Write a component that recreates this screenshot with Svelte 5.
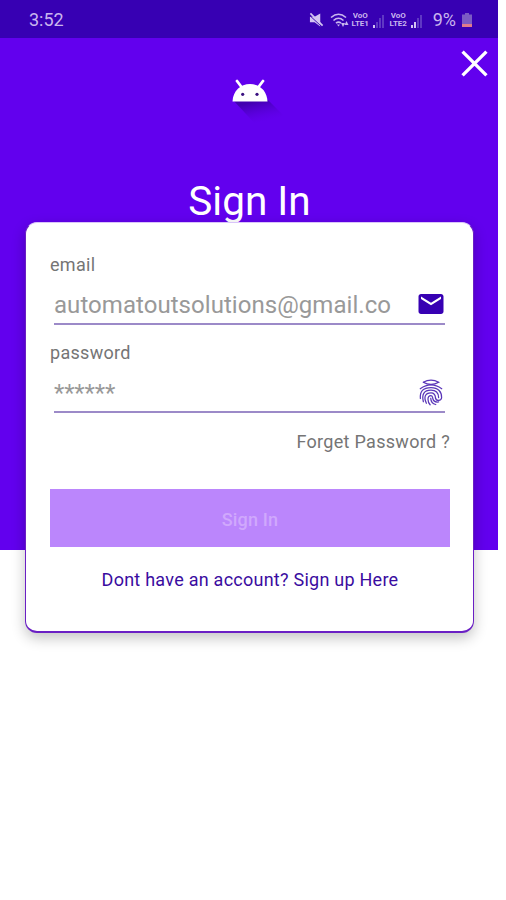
<script lang="ts">
	interface Sim {
		name: string;
		bars: number;
	}

	const sims: Sim[] = [
		{ name: 'LTE1', bars: 1 },
		{ name: 'LTE2', bars: 2 }
	];
	const barHeights = [3, 6, 10, 13];

	let email = 'automatoutsolutions@gmail.co';
	let password = '******';
</script>

<div class="screen">
	<header class="status-bar">
		<span class="clock">3:52</span>
		<div class="status-icons">
			<svg class="mute" viewBox="0 0 16 16">
				<path d="M1 4.500h5L12 1v14l-6-4.500H1z" />
				<path class="slash-gap" d="M0 2.500l14 13" />
				<path class="slash" d="M1.500 1l13 13" />
			</svg>
			<svg class="wifi" viewBox="0 0 19 16">
				<path d="M1 5.500Q8.500-1 16 5.500M3.500 8.500q5-4.500 10 0M6 11.200q2.500-2.200 5 0" />
				<path class="fill" d="M7 12.500h3l-1.500 2zM11 11h4l-2 4zM14.500 13l2-4 2 4z" />
			</svg>
			{#each sims as sim}
				<div class="sim">
					<div class="lte">
						<span>VoO</span>
						<span>{sim.name}</span>
					</div>
					<div class="signal">
						{#each barHeights as height, i}
							<i class:on={i < sim.bars} style="height: {height}px"></i>
						{/each}
					</div>
				</div>
			{/each}
			<span class="percent">9%</span>
			<svg class="battery" viewBox="0 0 10 14">
				<path class="shell" d="M3 0h4v1.500h3V14H0V1.500h3z" />
				<path class="level" d="M0 11h10v3H0z" />
			</svg>
		</div>
	</header>

	<section class="hero">
		<div class="toolbar">
			<svg class="close" viewBox="0 0 26 26">
				<path d="M1.500 1.500l23 23M24.500 1.500l-23 23" />
			</svg>
		</div>
		<svg class="logo" viewBox="0 0 60 50">
			<defs>
				<linearGradient id="shade" x1="0.25" y1="0" x2="0.6" y2="0.8">
					<stop offset="0.15" stop-color="#3a00a0" stop-opacity="0.8" />
					<stop offset="1" stop-color="#5a00d8" stop-opacity="0" />
				</linearGradient>
			</defs>
			<path fill="url(#shade)" d="M2 22h35l15 15-6 12H27z" />
			<path class="antenna" d="M6 3l4.500 6M32 3l-4.500 6" />
			<path fill="#fff" d="M1.500 23.500C2 12.500 9.500 6 19 6S36 12.500 36.500 23.500z" />
			<circle cx="11.700" cy="16.300" r="1.600" />
			<circle cx="26" cy="16.300" r="1.600" />
		</svg>
		<h1>Sign In</h1>
	</section>

	<main class="card">
		<span class="label">email</span>
		<div class="field">
			<span class="value">{email}</span>
			<svg class="icon" viewBox="0 0 24 24">
				<path
					d="M20 4H4c-1.100 0-1.990.9-1.990 2L2 18c0 1.100.9 2 2 2h16c1.100 0 2-.9 2-2V6c0-1.100-.9-2-2-2zm0 4l-8 5-8-5V6l8 5 8-5v2z"
				/>
			</svg>
		</div>
		<span class="label second">password</span>
		<div class="field">
			<span class="value stars">{password}</span>
			<svg class="icon fingerprint" viewBox="0 0 24 24">
				<path d="M5.800 4.200Q12 .8 18.200 4.200Q12 7.800 5.800 4.200" />
				<path d="M3.400 9.400Q12 3.200 20.600 9.400" />
				<path d="M3.500 17.200c-.5-5.700 2-8.800 8.500-8.800 5.800 0 8.700 3.700 8.500 8.200-.3 2.700-4.300 3-4.900.2" />
				<path d="M5.900 19.800c-1.400-5.600.2-9.300 6.100-9.300 4.100 0 6 2.600 6.100 6" />
				<path d="M8.300 21c-2.200-4.700-1.300-8.300 3.700-8.300 2.400 0 3.500 1.700 3.600 4.100" />
				<path d="M11.300 22.200c-2-2.200-2.800-7.300.7-7.300 1.500 0 1.200 1.400 1.500 2.500.5 1.900 2.200 2.900 4.600 2.500" />
				<path d="M11.800 17c.1 2.900 1.500 4.500 4 5" />
			</svg>
		</div>
		<span class="forgot">Forget Password ?</span>
		<button class="submit" disabled>Sign In</button>
		<span class="signup">Dont have an account? Sign up Here</span>
	</main>
</div>

<style>
	:global(body) {
		background: #fff;
	}

	.screen {
		width: 498px;
		height: 900px;
		overflow: hidden;
		font-family: Roboto, 'Liberation Sans', sans-serif;
	}

	.status-bar {
		display: flex;
		align-items: center;
		justify-content: space-between;
		height: 38px;
		padding: 1px 26px 0 29px;
		box-sizing: border-box;
		background: #3700b3;
		color: #c9b6ee;
	}

	.clock,
	.percent {
		font-size: 18px;
		line-height: 20px;
	}

	.status-icons {
		display: flex;
		align-items: center;
	}

	.mute {
		width: 15px;
		height: 16px;
		margin-right: 6px;
		fill: #d3c3f2;
	}

	.slash-gap {
		stroke: #3700b3;
		stroke-width: 1;
	}

	.slash {
		stroke: #d3c3f2;
		stroke-width: 1.8;
	}

	.wifi {
		width: 19px;
		height: 16px;
		margin-right: 2px;
		fill: none;
		stroke: #c9b6ee;
		stroke-width: 1.6;
	}

	.wifi .fill {
		fill: #c9b6ee;
		stroke: none;
	}

	.sim {
		display: flex;
		align-items: flex-end;
		width: 38px;
		gap: 3px;
	}

	.lte {
		display: flex;
		flex-direction: column;
		align-items: center;
		width: 19px;
		font-size: 8px;
		font-weight: 700;
		line-height: 8px;
	}

	.lte span {
		display: block;
		height: 8px;
		overflow: hidden;
	}

	.signal {
		display: flex;
		align-items: flex-end;
		gap: 1px;
	}

	.signal i {
		width: 2px;
		background: #5f38c4;
	}

	.signal i.on {
		background: #d3c3f2;
	}

	.percent {
		margin-left: 6px;
	}

	.battery {
		width: 10px;
		height: 14px;
		margin-left: 6px;
	}

	.shell {
		fill: #7b5bc4;
	}

	.level {
		fill: #e07a8c;
	}

	.hero {
		display: flex;
		flex-direction: column;
		align-items: center;
		height: 512px;
		background: #6200ee;
	}

	.toolbar {
		display: flex;
		justify-content: flex-end;
		align-self: stretch;
		height: 40px;
		padding: 12px 10px 0 0;
		box-sizing: border-box;
	}

	.close {
		width: 27px;
		height: 27px;
		stroke: #fff;
		stroke-width: 3.2;
	}

	.logo {
		width: 60px;
		height: 50px;
		margin-left: 23px;
	}

	.antenna {
		fill: none;
		stroke: #fff;
		stroke-width: 2.8;
		stroke-linecap: round;
	}

	.logo circle {
		fill: #3a1080;
	}

	h1 {
		margin: 49px 0 0 1px;
		color: #fff;
		font-size: 40.500px;
		font-weight: 400;
		line-height: 48px;
	}

	.card {
		position: relative;
		display: flex;
		flex-direction: column;
		width: 449px;
		height: 411px;
		margin: -328px 0 0 25px;
		padding: 30px 23px 0 24px;
		box-sizing: border-box;
		background: #fff;
		border: 1px solid #6a1fc4;
		border-top-color: #d9c4fa;
		border-bottom-width: 2px;
		border-radius: 12px;
		box-shadow: 0 5px 14px rgba(0, 0, 0, 0.24);
	}

	.label,
	.forgot {
		color: #757575;
		font-size: 18px;
		line-height: 24px;
		letter-spacing: 0.3px;
	}

	.field {
		display: flex;
		align-items: center;
		justify-content: space-between;
		height: 48px;
		margin: 0 5px 0 4px;
		padding-top: 8px;
		box-sizing: border-box;
		border-bottom: 2px solid #9c8ac8;
	}

	.value {
		padding-top: 2px;
		color: #999;
		font-size: 24px;
		line-height: 28px;
		letter-spacing: 0.05px;
	}

	.stars {
		letter-spacing: -0.15px;
	}

	.icon {
		width: 30px;
		height: 30px;
		margin-right: -1px;
		fill: #3700b3;
	}

	.fingerprint {
		fill: none;
		stroke: #5a36b8;
		stroke-width: 1;
		stroke-linecap: round;
	}

	.second {
		margin-top: 16px;
	}

	.forgot {
		margin-top: 17px;
		text-align: right;
	}

	.submit {
		height: 58px;
		margin-top: 35px;
		padding: 2px 0 0;
		background: #bb86fc;
		border: 0;
		color: #d0a8fc;
		font-family: inherit;
		font-size: 18px;
		font-weight: 500;
		letter-spacing: 0.2px;
	}

	.signup {
		margin-top: 21px;
		color: #3a0ca0;
		font-size: 18px;
		line-height: 24px;
		letter-spacing: 0.25px;
		text-align: center;
	}
</style>
